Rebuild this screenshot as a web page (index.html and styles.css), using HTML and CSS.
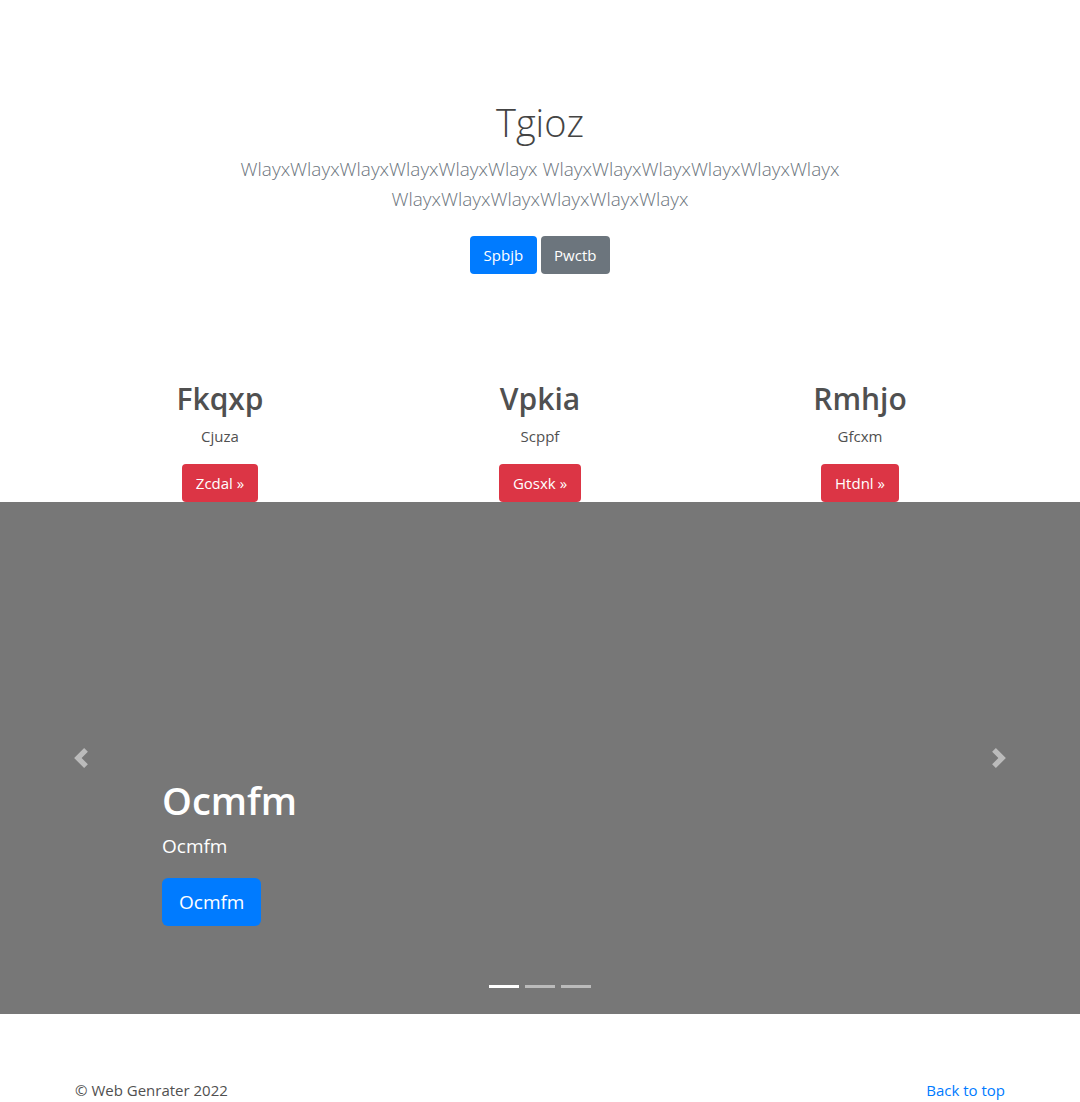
FILE: index.html
```html
<!DOCTYPE html>
<html lang="en">
<head>
<meta charset="utf-8">
<title>Tgioz</title>
<link rel="stylesheet" href="styles.css">
</head>
<body>
<main>
  <section class="hero">
    <div class="hero-inner">
      <h1 class="hero-title">Tgioz</h1>
      <p class="lead">WlayxWlayxWlayxWlayxWlayxWlayx WlayxWlayxWlayxWlayxWlayxWlayx WlayxWlayxWlayxWlayxWlayxWlayx</p>
      <div class="hero-actions">
        <a class="btn btn-primary" href="#">Spbjb</a>
        <a class="btn btn-secondary" href="#">Pwctb</a>
      </div>
    </div>
  </section>

  <section class="features">
    <div class="feature">
      <h2>Fkqxp</h2>
      <p>Cjuza</p>
      <a class="btn btn-danger" href="#">Zcdal »</a>
    </div>
    <div class="feature">
      <h2>Vpkia</h2>
      <p>Scppf</p>
      <a class="btn btn-danger" href="#">Gosxk »</a>
    </div>
    <div class="feature">
      <h2>Rmhjo</h2>
      <p>Gfcxm</p>
      <a class="btn btn-danger" href="#">Htdnl »</a>
    </div>
  </section>

  <section class="carousel">
    <div class="caption">
      <h1>Ocmfm</h1>
      <p>Ocmfm</p>
      <a class="btn btn-primary btn-lg" href="#">Ocmfm</a>
    </div>
    <a class="control control-prev" href="#" aria-label="Previous">
      <svg width="20" height="20" viewBox="0 0 8 8"><path d="M5.25 0l-4 4 4 4 1.5-1.5L4.25 4l2.5-2.5L5.25 0z"/></svg>
    </a>
    <a class="control control-next" href="#" aria-label="Next">
      <svg width="20" height="20" viewBox="0 0 8 8"><path d="M2.75 0l-1.5 1.5L3.75 4l-2.5 2.5L2.75 8l4-4-4-4z"/></svg>
    </a>
    <ol class="indicators">
      <li class="active"></li>
      <li></li>
      <li></li>
    </ol>
  </section>

  <footer class="footer">
    <p>© Web Genrater 2022</p>
    <a href="#">Back to top</a>
  </footer>
</main>
</body>
</html>
```
FILE: styles.css
```css
* { box-sizing: border-box; }

body {
  margin: 0;
  font-family: "Open Sans", "Noto Sans", "Liberation Sans", sans-serif;
  font-size: 16px;
  line-height: 24px;
  color: #505050;
  background: #fff;
}

a { text-decoration: none; }

.hero {
  padding: 98px 15px 0;
  text-align: center;
}

.hero-inner {
  max-width: 720px;
  margin: 0 auto;
}

.hero-title {
  margin: 0 0 8px;
  font-size: 38px;
  line-height: 48px;
  font-weight: 300;
  color: #444;
}

.lead {
  margin: 0;
  font-size: 19px;
  line-height: 30px;
  font-weight: 300;
  color: #6c757d;
}

.hero-actions {
  margin-top: 22px;
  display: flex;
  justify-content: center;
  gap: 4px;
}

.btn {
  display: inline-block;
  padding: 7px 13.5px;
  font-size: 15px;
  line-height: 24px;
  border-radius: 4px;
  color: #fff;
}

.btn-primary { background: #007bff; }
.btn-secondary { background: #6c757d; }
.btn-danger { background: #dc3545; padding-left: 14px; padding-right: 14px; }

.btn-lg {
  padding: 9px 17px;
  font-size: 19px;
  line-height: 30px;
  border-radius: 6px;
}

.features {
  max-width: 960px;
  margin: 106px auto 0;
  display: grid;
  grid-template-columns: repeat(3, 1fr);
  text-align: center;
}

.feature h2 {
  margin: 0 0 6px;
  font-size: 30px;
  line-height: 38px;
  font-weight: 600;
  color: #505050;
}

.feature p {
  margin: 0 0 16px;
  font-size: 15px;
  line-height: 24px;
}

.carousel {
  position: relative;
  height: 512px;
  background: #777;
}

.caption {
  position: absolute;
  left: 15%;
  right: 15%;
  bottom: 88px;
  display: flex;
  flex-direction: column;
  align-items: flex-start;
  color: #fff;
}

.caption h1 {
  margin: 0 0 8px;
  font-size: 38px;
  line-height: 48px;
  font-weight: 600;
}

.caption p {
  margin: 0 0 18px;
  font-size: 19px;
  line-height: 28px;
}

.control {
  position: absolute;
  top: 0;
  bottom: 0;
  width: 15%;
  display: flex;
  align-items: center;
  justify-content: center;
}

.control svg { fill: #fff; opacity: .5; }

.control-prev { left: 0; }
.control-next { right: 0; }

.indicators {
  position: absolute;
  left: 0;
  right: 0;
  bottom: 26px;
  margin: 0;
  padding: 0;
  list-style: none;
  display: flex;
  justify-content: center;
  gap: 6px;
}

.indicators li {
  width: 30px;
  height: 3px;
  background: #fff;
  opacity: .5;
}

.indicators li.active { opacity: 1; }

.footer {
  max-width: 960px;
  margin: 64px auto 0;
  padding: 0 15px;
  display: flex;
  justify-content: space-between;
  font-size: 15px;
  line-height: 24px;
}

.footer p { margin: 0; color: #505050; }
.footer a { color: #007bff; }
```
